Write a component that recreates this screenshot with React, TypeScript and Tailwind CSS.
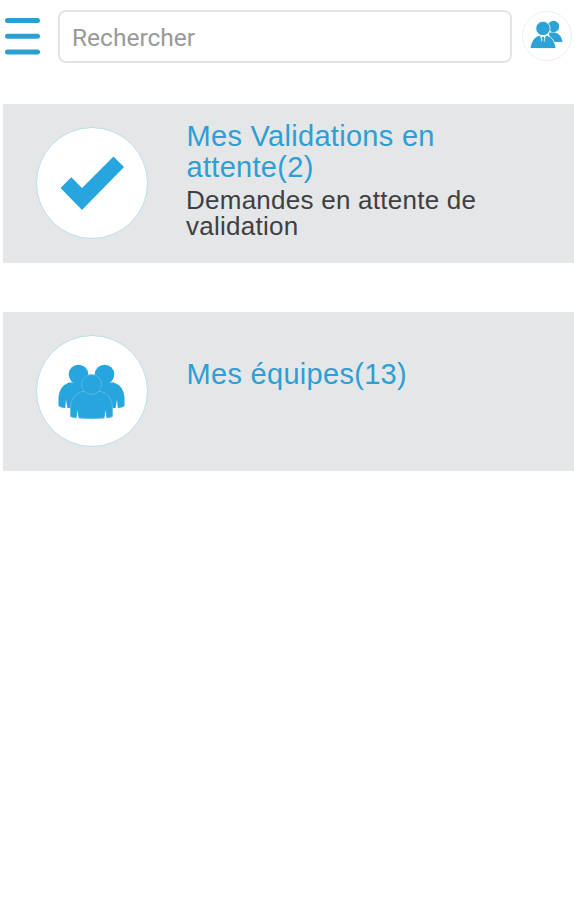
import type { ReactNode } from 'react';

function MenuIcon() {
  return (
    <svg width="36" height="40" viewBox="0 0 36 40" fill="none" stroke="#2c9fd0" strokeWidth="5" strokeLinecap="round">
      <path d="M3.500 4.500h30M3.500 20.300h30M3.500 36h30" />
    </svg>
  );
}

function ContactsIcon() {
  return (
    <svg width="34" height="30" viewBox="0 0 34 30" fill="#2da2d5">
      <circle cx="23.500" cy="6.500" r="5.700" />
      <path d="M19 12.500h6q6.500 1.500 7.500 9.500H20z" />
      <g stroke="#fff" strokeWidth="0.8">
        <circle cx="13" cy="8.500" r="7.200" />
        <path d="M0 28.500Q1.500 18 8.500 15.500H17.500q7 2.500 8.500 13z" />
      </g>
      <path fill="#fff" d="m10 15.500 3 11 3-11z" />
      <path d="m13 16.500-1.700 1.500 1 1.800-1 4.500 1.700 3.200 1.700-3.200-1-4.500 1-1.800z" />
    </svg>
  );
}

function CheckIcon() {
  return (
    <svg width="64" height="56" viewBox="0 0 64 56" fill="#27a5df">
      <path d="M.5 33 11.300 22.300 22 33 53.500 1.500 64 12 22 55z" />
    </svg>
  );
}

function TeamIcon() {
  return (
    <svg className="mt-[2px]" width="68" height="56" viewBox="0 0 68 56" fill="#27a5df">
      <circle cx="20.500" cy="10.500" r="9.800" />
      <circle cx="46.500" cy="10.500" r="9.800" />
      <path d="M.500 42V33Q1.500 22 11 18.500h17l8 12-8 13.500H7q-4 0-6.500-2z" />
      <path d="M66.500 42V33q-1-11-10.500-14.500H39l-8 12 8 13.500h21q4 0 6.500-2z" />
      <path d="m7.200 44.500.8-9 1.500 9zM59.800 44.500l-.8-9-1.500 9z" fill="#fff" />
      <g stroke="#62bce6" strokeWidth="0.8">
        <path d="M12.500 52.500V43q1-12 11-15.500h20q10 3.500 11 15.500v9.500q-3 1.500-8 1.500-13 1.500-26 0-5 0-8-1.500z" />
        <circle cx="33.500" cy="20.500" r="10" />
      </g>
      <path d="m18.500 55 .8-9 1.500 9zM48.500 55l-.8-9-1.500 9z" fill="#fff" />
    </svg>
  );
}

type CardProps = {
  icon: ReactNode;
  title: string;
  subtitle?: string;
};

function Card({ icon, title, subtitle }: CardProps) {
  return (
    <button type="button" className="flex h-[159px] w-[571px] items-center bg-[#e5e6e8] pb-[1px] pl-[33px] text-left">
      <span className="flex size-[112px] shrink-0 items-center justify-center rounded-full border border-[#b9deed] bg-white">
        {icon}
      </span>
      <span className={`ml-[38px] block w-[320px] ${subtitle ? 'pb-[7px]' : 'pb-[34px]'}`}>
        <span className="block pl-[0.5px] text-[29px] leading-[31px] tracking-[0.3px] text-[#2d9fd4]">{title}</span>
        {subtitle && (
          <span className="mt-[4px] block text-[26px] leading-[26px] tracking-[0.25px] text-[#3e3f42]">{subtitle}</span>
        )}
      </span>
    </button>
  );
}

export default function App() {
  return (
    <div className="min-h-screen w-[582px] bg-white font-['Liberation_Sans',Arial,sans-serif]">
      <header className="flex h-[104px] items-start pt-[10px] pl-[4px]">
        <button type="button" aria-label="Menu" className="mt-[6px]">
          <MenuIcon />
        </button>
        <input
          type="text"
          placeholder="Rechercher"
          className="ml-[18px] h-[53px] w-[454px] rounded-[8px] border-2 border-[#e2e5e6] bg-white px-[12px] pt-[2px] font-[Roboto,sans-serif] text-[24.5px] text-[#555] outline-none placeholder:text-[#999]"
        />
        <button
          type="button"
          aria-label="Contacts"
          className="mt-[1px] ml-[10px] flex size-[50px] items-center justify-center rounded-full border border-[#e6eff2] bg-white pb-[3px]"
        >
          <ContactsIcon />
        </button>
      </header>

      <main className="flex flex-col gap-[49px] pl-[3px]">
        <Card icon={<CheckIcon />} title="Mes Validations en attente(2)" subtitle="Demandes en attente de validation" />
        <Card icon={<TeamIcon />} title="Mes équipes(13)" />
      </main>
    </div>
  );
}
